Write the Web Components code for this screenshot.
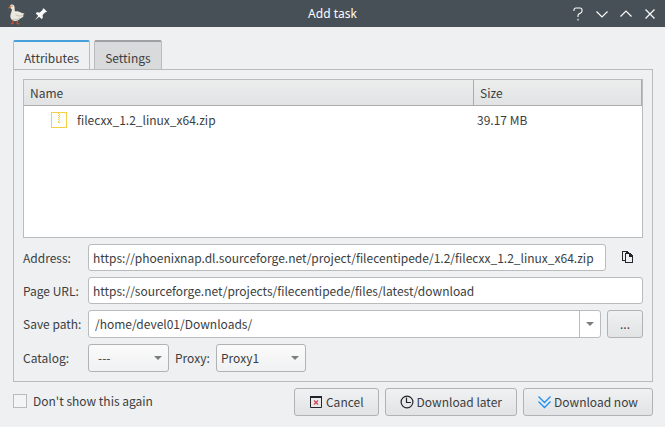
<!DOCTYPE html>
<html lang="en">
<head>
<meta charset="utf-8">
<title>Add task</title>
<style>
  html, body { margin: 0; background: #eff0f1; }
  body {
    --line: #b9bbbd;
    --face: linear-gradient(#f0f1f2, #e2e3e5);
    color: #3b3e41;
    font: 12px/20px "Noto Sans CJK SC", "Noto Sans", sans-serif;
  }
</style>
</head>
<body>
<task-dialog></task-dialog>

<template id="t-dialog">
  <style>
    :host { display: flex; flex-direction: column; min-height: 100vh; }
    main { flex: 1; display: flex; flex-direction: column; padding: 13px 12px 11px 13px; }
    tab-panel { flex: 1; }
    .pair { display: flex; gap: 6px; }
    .foot { display: flex; align-items: center; gap: 6px; margin-top: 6px; }
    .foot check-option { flex: 1; }
  </style>
  <title-bar>Add task</title-bar>
  <main>
    <tab-panel>
      <file-table></file-table>
      <text-field label="Address:" value="https://phoenixnap.dl.sourceforge.net/project/filecentipede/1.2/filecxx_1.2_linux_x64.zip"><copy-button slot="after"></copy-button></text-field>
      <text-field label="Page URL:" value="https://sourceforge.net/projects/filecentipede/files/latest/download"></text-field>
      <path-field></path-field>
      <div class="pair">
        <choice-field label="Catalog:" value="---" class="first"></choice-field>
        <choice-field label="Proxy:" value="Proxy1"></choice-field>
      </div>
    </tab-panel>
    <div class="foot">
      <check-option>Don't show this again</check-option>
      <action-button>
        <svg slot="icon" width="14" height="14" viewBox="0 0 14 14" fill="none"><path d="M1.500 1v11.500h11V1" stroke="#232629"/><path d="M1 2h12" stroke="#232629" stroke-width="2"/><path d="M5 5.500l4 4M9 5.500l-4 4" stroke="#da4453" stroke-width="1.300"/></svg>
        Cancel
      </action-button>
      <action-button>
        <svg slot="icon" width="14" height="14" viewBox="0 0 14 14" fill="none" stroke="#232629" stroke-width="1.200"><circle cx="7" cy="7" r="5.900"/><path d="M6.500 2.500v5H11"/></svg>
        Download later
      </action-button>
      <action-button>
        <svg slot="icon" width="13" height="14" viewBox="0 0 13 14" fill="none" stroke="#1d8ff0" stroke-width="1.300"><path d="M.5 1.500l6 6 6-6M.5 6.500l6 6 6-6"/></svg>
        Download now
      </action-button>
    </div>
  </main>
</template>

<template id="t-title">
  <style>
    :host { display: grid; grid-template-columns: 1fr auto 1fr; align-items: center; height: 27px; padding: 0 7px; background: #475057; color: #fcfcfc; font: 12px/20px "Noto Sans", sans-serif; }
    div { display: flex; align-items: center; gap: 8px; height: 24px; }
    .end { justify-content: flex-end; }
    h1 { font: inherit; margin: 0; }
    button { all: unset; display: flex; width: 16px; height: 16px; }
    svg { display: block; }
  </style>
  <div>
    <svg width="18" height="22" viewBox="0 0 18 22">
      <path d="M6 17v3.500H3.800M10.300 17v3.500l2 .5" stroke="#c4512c" stroke-width="1.400" fill="none"/>
      <path d="M2.800 3.300C3 1.200 6.600.8 7.400 3.200c.5 1.800.1 3.500.5 5 2-.2 4.300.3 6 1.300 1.200.7 2.300.9 3.600 1-.6.9-1.200 1.300-1.800 1.500.3.500.6.700 1.100.8-.9 1.500-2.200 2.300-3.400 2.800-1.300 1.700-3.300 2.400-5.400 2.300-3.200-.1-5-2.600-4.600-5.600.3-2.300 1.600-3.600 1.500-6.300-.9-.2-2.100-1-2.100-2.700z" fill="#ebe8df"/>
      <path d="M8.500 11.500c1.500 1.500 4.500 2 6.800 1M6 16c2.300 1 5 .7 7-.8" stroke="#b9b4a8" fill="none" stroke-width=".8"/>
      <path d="M3.600 2.200L.8 5.400l3.300-.9z" fill="#e0662d"/><circle cx="5" cy="3" r=".6" fill="#444"/>
    </svg>
    <button aria-label="Pin"><svg width="16" height="16" viewBox="0 0 16 16"><path d="M10.600 2.200l3.300 3.300-1 .9-.7-.2-2.600 2.900.2 3-1.200 1L6 10.700 2 14.300l3.200-4.500-2.400-2.400 1-1.100 3 .1 3-2.600-.2-.7z" fill="#fcfcfc"/></svg></button>
  </div>
  <h1><slot></slot></h1>
  <div class="end">
    <button aria-label="Help"><svg width="16" height="16" viewBox="0 0 16 16" fill="none" stroke="#fcfcfc" stroke-width="1.100"><path d="M4 5V4q0-2 2-2h4q2 0 2 2v1q0 1-1 1.700L9.200 7.800q-1.200.8-1.200 2v1.200M8 12.800v1.700"/></svg></button>
    <button aria-label="Minimize"><svg width="16" height="16" viewBox="0 0 16 16" fill="none" stroke="#fcfcfc" stroke-width="1.200"><path d="M2.500 5.500L8 11l5.500-5.500"/></svg></button>
    <button aria-label="Maximize"><svg width="16" height="16" viewBox="0 0 16 16" fill="none" stroke="#fcfcfc" stroke-width="1.200"><path d="M2.500 10.500L8 5l5.500 5.500"/></svg></button>
    <button aria-label="Close"><svg width="16" height="16" viewBox="0 0 16 16" fill="none" stroke="#fcfcfc" stroke-width="1.200"><path d="M3.500 3.500l9 9M12.500 3.500l-9 9"/></svg></button>
  </div>
</template>

<template id="t-tabs">
  <style>
    :host { display: flex; flex-direction: column; }
    .tabs { display: flex; gap: 4px; margin-bottom: -1px; }
    button { all: unset; box-sizing: border-box; height: 30px; padding: 4px 10px 0; border: 1px solid var(--line); border-top: 2px solid #9da1a4; border-radius: 2px 2px 0 0; background: #d9dadc; }
    button[aria-selected=true] { border-top-color: #459fda; border-bottom-color: #eff0f1; background: #eff0f1; }
    .pane { flex: 1; display: flex; flex-direction: column; gap: 6px; padding: 9px; border: 1px solid var(--line); }
    ::slotted(file-table) { flex: 1; }
  </style>
  <div class="tabs" role="tablist">
    <button role="tab" aria-selected="true">Attributes</button>
    <button role="tab" aria-selected="false">Settings</button>
  </div>
  <div class="pane" role="tabpanel"><slot></slot></div>
</template>

<template id="t-table">
  <style>
    :host { display: block; min-height: 120px; border: 1px solid var(--line); background: #fff; }
    table { width: 100%; border-collapse: separate; border-spacing: 0; table-layout: fixed; }
    th { box-sizing: border-box; height: 26px; padding: 0 6px; text-align: left; font-weight: 400; background: linear-gradient(#eceded, #e2e3e4); border-right: 1px solid #aeacaa; border-bottom: 1px solid #aeacaa; }
    th:last-child { width: 168px; }
    td { height: 28px; padding: 0 3px; }
    .name { display: flex; align-items: center; gap: 10px; padding-left: 24px; }
  </style>
  <table>
    <thead><tr><th>Name</th><th>Size</th></tr></thead>
    <tbody><tr>
      <td><div class="name"><svg width="16" height="16" viewBox="0 0 16 16" fill="none" stroke="#f7cf46" shape-rendering="crispEdges"><path d="M.5.5h15v15H.5z"/><path d="M7.500 1v9" stroke-dasharray="1 1"/><path d="M8.500 2v8" stroke-dasharray="1 1"/><path d="M7 10.500h2"/></svg>filecxx_1.2_linux_x64.zip</div></td>
      <td>39.17 MB</td>
    </tr></tbody>
  </table>
</template>

<template id="t-text">
  <style>
    :host { display: flex; align-items: center; }
    label { flex: none; width: 65px; white-space: nowrap; }
    input { flex: 1; min-width: 0; box-sizing: border-box; height: 27px; margin: 0; padding: 0 4px; border: 1px solid var(--line); border-radius: 3px; background: #fff; color: inherit; font: inherit; outline: none; }
  </style>
  <label for="i"></label><input id="i" type="text"><slot name="after"></slot>
</template>

<template id="t-copy">
  <style>
    :host { display: flex; width: 37px; justify-content: center; box-sizing: border-box; }
    button { all: unset; display: flex; padding: 4px 0 4px 6px; }
  </style>
  <button aria-label="Copy address"><svg width="12" height="13" viewBox="0 0 12 13" fill="none" stroke="#232629" shape-rendering="crispEdges"><path d="M3 9.500H.5V.5h5M3.500 2v9.500h7V5M3 2.500h4"/><path d="M4 0h1l2 2H4zM7 2h1l3 3v1H7z" fill="#232629" stroke="none"/></svg></button>
</template>

<template id="t-path">
  <style>
    :host { display: flex; align-items: center; gap: 6px; }
    label { flex: none; width: 59px; white-space: nowrap; }
    .combo { flex: 1; display: flex; box-sizing: border-box; height: 28px; border: 1px solid var(--line); border-radius: 3px; background: #fff; overflow: hidden; }
    input { flex: 1; min-width: 0; margin: 0; padding: 0 6px; border: 0; background: none; color: inherit; font: inherit; outline: none; }
    button { all: unset; box-sizing: border-box; display: flex; align-items: center; justify-content: center; }
    .drop { width: 21px; border-left: 1px solid var(--line); }
    .browse { width: 36px; height: 28px; border: 1px solid #b0b2b4; border-radius: 3px; background: var(--face); }
  </style>
  <label for="p">Save path:</label>
  <div class="combo"><input id="p" type="text" value="/home/devel01/Downloads/"><button class="drop" aria-label="Recent paths"><svg width="8" height="5" viewBox="0 0 8 5"><path d="M0 0h8L4 4z" fill="#7b7e80"/></svg></button></div>
  <button class="browse">...</button>
</template>

<template id="t-choice">
  <style>
    :host { display: flex; align-items: center; }
    label { flex: none; width: 41px; white-space: nowrap; }
    :host(.first) label { width: 65px; }
    .box { display: grid; align-items: center; }
    select { grid-area: 1 / 1; appearance: none; box-sizing: border-box; width: 90px; height: 28px; margin: 0; padding: 0 24px 0 4px; border: 1px solid #b0b2b4; border-radius: 3px; background: linear-gradient(#fbfbfb, #f0f1f2); color: inherit; font: inherit; }
    :host(.first) select { width: 81px; padding-left: 9px; }
    svg { grid-area: 1 / 1; justify-self: end; margin-right: 7px; pointer-events: none; }
  </style>
  <label for="s"></label>
  <div class="box"><select id="s"><option></option></select><svg width="8" height="5" viewBox="0 0 8 5"><path d="M0 0h8L4 4z" fill="#7b7e80"/></svg></div>
</template>

<template id="t-check">
  <style>
    :host { display: block; }
    label { display: inline-flex; align-items: center; gap: 6px; }
    input { appearance: none; box-sizing: border-box; width: 14px; height: 14px; margin: 0; border: 1px solid var(--line); background: #f3f4f4; }
  </style>
  <label><input type="checkbox"><slot></slot></label>
</template>

<template id="t-action">
  <style>
    :host { display: block; }
    button { all: unset; box-sizing: border-box; display: flex; align-items: center; gap: 3px; height: 28px; padding: 0 14px; border: 1px solid #b0b2b4; border-radius: 3px; background: var(--face); white-space: nowrap; }
  </style>
  <button><slot name="icon"></slot><span><slot></slot></span></button>
</template>

<script>
  class Part extends HTMLElement {
    constructor() {
      super();
      const source = document.getElementById(this.constructor.source);
      this.attachShadow({ mode: "open" }).append(source.content.cloneNode(true));
    }
  }
  const part = (name, source, connect) => customElements.define(name, class extends Part {
    static source = source;
    connectedCallback() { if (connect) connect(this, this.shadowRoot); }
  });

  part("title-bar", "t-title");
  part("tab-panel", "t-tabs");
  part("file-table", "t-table");
  part("copy-button", "t-copy");
  part("path-field", "t-path");
  part("check-option", "t-check");
  part("action-button", "t-action");
  part("text-field", "t-text", (host, root) => {
    root.querySelector("label").textContent = host.getAttribute("label");
    root.querySelector("input").value = host.getAttribute("value");
  });
  part("choice-field", "t-choice", (host, root) => {
    root.querySelector("label").textContent = host.getAttribute("label");
    root.querySelector("option").textContent = host.getAttribute("value");
  });
  part("task-dialog", "t-dialog");
</script>
</body>
</html>
